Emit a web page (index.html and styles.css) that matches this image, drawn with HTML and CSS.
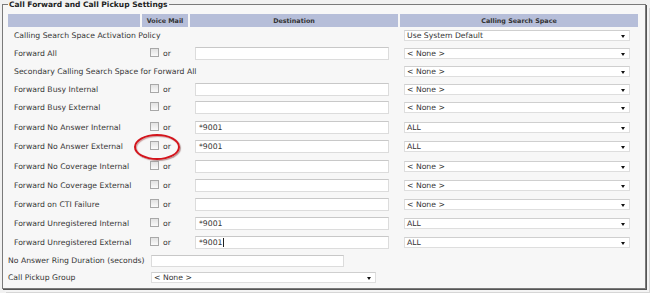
FILE: index.html
```html
<!DOCTYPE html>
<html>
<head>
<meta charset="utf-8">
<link rel="stylesheet" href="styles.css">
</head>
<body>
<fieldset class="box">
  <legend class="legend">Call Forward and Call Pickup Settings</legend>
  <div class="grid">
    <div class="hd"></div>
    <div class="hd">Voice Mail</div>
    <div class="hd">Destination</div>
    <div class="hd">Calling Search Space</div>

    <div class="lbl span3">Calling Search Space Activation Policy</div>
    <div class="cell"><div class="sel">Use System Default</div></div>

    <div class="lbl">Forward All</div>
    <div class="vm"><span class="cb"></span>or</div>
    <div class="cell"><div class="txt"></div></div>
    <div class="cell"><div class="sel">&lt; None &gt;</div></div>

    <div class="lbl span3">Secondary Calling Search Space for Forward All</div>
    <div class="cell"><div class="sel">&lt; None &gt;</div></div>

    <div class="lbl">Forward Busy Internal</div>
    <div class="vm"><span class="cb"></span>or</div>
    <div class="cell"><div class="txt"></div></div>
    <div class="cell"><div class="sel">&lt; None &gt;</div></div>

    <div class="lbl">Forward Busy External</div>
    <div class="vm"><span class="cb"></span>or</div>
    <div class="cell"><div class="txt"></div></div>
    <div class="cell"><div class="sel">&lt; None &gt;</div></div>

    <div class="lbl">Forward No Answer Internal</div>
    <div class="vm"><span class="cb"></span>or</div>
    <div class="cell"><div class="txt">*9001</div></div>
    <div class="cell"><div class="sel">ALL</div></div>

    <div class="lbl">Forward No Answer External</div>
    <div class="vm"><span class="cb"></span>or</div>
    <div class="cell"><div class="txt">*9001</div></div>
    <div class="cell"><div class="sel">ALL</div></div>

    <div class="lbl">Forward No Coverage Internal</div>
    <div class="vm"><span class="cb"></span>or</div>
    <div class="cell"><div class="txt"></div></div>
    <div class="cell"><div class="sel">&lt; None &gt;</div></div>

    <div class="lbl">Forward No Coverage External</div>
    <div class="vm"><span class="cb"></span>or</div>
    <div class="cell"><div class="txt"></div></div>
    <div class="cell"><div class="sel">&lt; None &gt;</div></div>

    <div class="lbl">Forward on CTI Failure</div>
    <div class="vm"><span class="cb"></span>or</div>
    <div class="cell"><div class="txt"></div></div>
    <div class="cell"><div class="sel">&lt; None &gt;</div></div>

    <div class="lbl">Forward Unregistered Internal</div>
    <div class="vm"><span class="cb"></span>or</div>
    <div class="cell"><div class="txt">*9001</div></div>
    <div class="cell"><div class="sel">ALL</div></div>

    <div class="lbl">Forward Unregistered External</div>
    <div class="vm"><span class="cb"></span>or</div>
    <div class="cell"><div class="txt">*9001<span class="caret"></span></div></div>
    <div class="cell"><div class="sel">ALL</div></div>
  </div>
  <div class="extra">
    <div class="xlbl">No Answer Ring Duration (seconds)</div>
    <div class="cell"><div class="txt ring"></div></div>
    <div class="xlbl">Call Pickup Group</div>
    <div class="cell"><div class="sel pick">&lt; None &gt;</div></div>
  </div>
</fieldset>
<div class="ring-mark"></div>
</body>
</html>
```

FILE: styles.css
```css
html, body {
  margin: 0;
  padding: 0;
  background: #f1f1f1;
  width: 650px;
  height: 293px;
  overflow: hidden;
  font-family: "DejaVu Sans", Verdana, sans-serif;
  font-size: 7.7px;
  color: #363636;
}

.box {
  margin: 0 0 0 2px;
  width: 644px;
  height: 289px;
  box-sizing: border-box;
  border: 1px solid #7a7a7a;
  background: #f7f7f7;
  padding: 5px 6px 1px 5px;
  box-shadow: 1px 1px 0 #555, 3px 3px 0 #f4f4f4, 4px 4px 0 #d6d6d6;
}

.legend {
  padding: 0 1px;
  margin-left: 0;
  font-weight: bold;
  font-size: 7.5px;
  line-height: 9px;
  color: #222;
}

.grid {
  display: grid;
  grid-template-columns: 132px 46px 208px 238px;
  grid-template-rows: 13px 17px 18px 18px 18px 19px 20px 19px 20px 19px 19px 19px 19px;
  column-gap: 2px;
}

.hd {
  background: #b6bed9;
  font-weight: bold;
  font-size: 6.4px;
  display: flex;
  align-items: center;
  justify-content: center;
  color: #333;
}

.lbl {
  display: flex;
  align-items: center;
  padding-left: 6px;
  white-space: nowrap;
}

.span3 {
  grid-column: 1 / span 3;
}

.vm {
  display: flex;
  align-items: center;
  padding-left: 8px;
  gap: 4px;
}

.cb {
  width: 7px;
  height: 7px;
  border: 1px solid #a8a8a8;
  background: linear-gradient(#e2e2e2, #fafafa);
  margin-top: -2px;
}

.cell {
  display: flex;
  align-items: center;
}

.txt {
  margin-left: 5px;
  width: 194px;
  height: 13px;
  box-sizing: border-box;
  background: #fff;
  border: 1px solid #dcdcdc;
  border-top-color: #c8c8c8;
  padding-left: 3px;
  display: flex;
  align-items: center;
  color: #333;
}

.caret {
  display: inline-block;
  width: 1px;
  height: 9px;
  background: #222;
  margin-left: 1px;
}

.sel {
  margin-left: 4px;
  width: 226px;
  height: 11px;
  box-sizing: border-box;
  background: #fff;
  border: 1px solid #dedede;
  border-top-color: #cfcfcf;
  padding-left: 2px;
  display: flex;
  align-items: center;
  position: relative;
  color: #333;
}

.sel::after {
  content: "";
  position: absolute;
  right: 4px;
  top: 4px;
  border-left: 2.5px solid transparent;
  border-right: 2.5px solid transparent;
  border-top: 3px solid #111;
}

.extra {
  display: grid;
  grid-template-columns: 143px auto;
  grid-template-rows: 17px 16px;
}

.xlbl {
  display: flex;
  align-items: center;
  white-space: nowrap;
}

.ring {
  margin-left: 0;
  width: 193px;
  height: 12px;
}

.pick {
  margin-left: 0;
  width: 225px;
}

.ring-mark {
  position: absolute;
  left: 134px;
  top: 134px;
  width: 46px;
  height: 26px;
  box-sizing: border-box;
  border: 2.5px solid #d3141c;
  border-radius: 50%;
  box-shadow: 1px 1px 1px rgba(80, 0, 0, 0.4), inset 1px 1px 1px rgba(120, 0, 0, 0.35);
}
```
